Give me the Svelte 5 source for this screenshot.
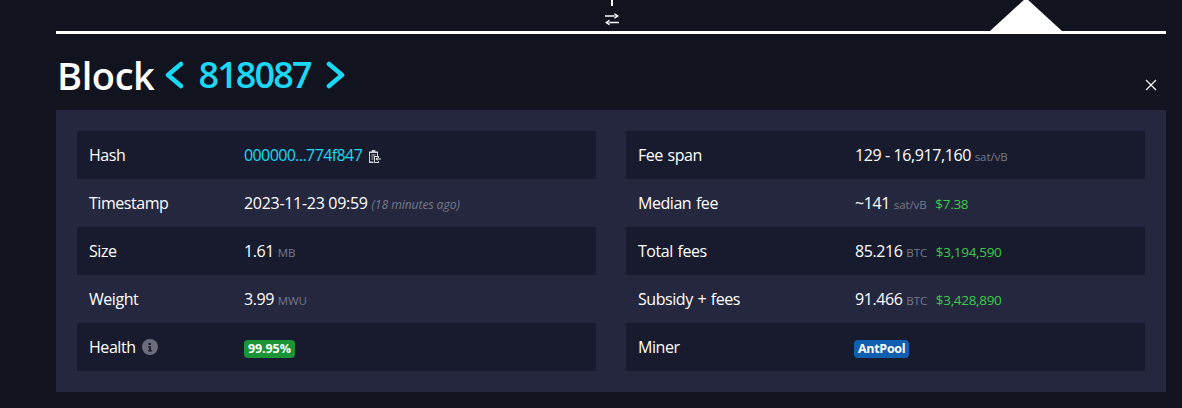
<script>
const left = [
	{ label: 'Hash' },
	{ label: 'Timestamp' },
	{ label: 'Size' },
	{ label: 'Weight' },
	{ label: 'Health' }
];
const right = [
	{ label: 'Fee span', value: '129 - 16,917,160', unit: 'sat/vB' },
	{ label: 'Median fee', value: '~141', unit: 'sat/vB', fiat: '$7.38' },
	{ label: 'Total fees', value: '85.216', unit: 'BTC', fiat: '$3,194,590' },
	{ label: 'Subsidy + fees', value: '91.466', unit: 'BTC', fiat: '$3,428,890' }
];
</script>

<div class="page">
	<div class="top">
		<span class="tick"></span>
		<svg class="swap" width="14" height="13" viewBox="0 0 14 13" aria-hidden="true">
			<path d="M0 2.300h10.500v1.500H0zM14 3l-4.500-3v6zM14 8.800H3.500v1.500H14zM0 9.500l4.500-3v6z" fill="#fff" />
		</svg>
		<span class="arrow"></span>
	</div>

	<div class="heading">
		<h1>Block</h1>
		<svg class="chev first" width="19" height="28" viewBox="0 0 19 28" aria-hidden="true">
			<path d="M17 3L4 14l13 11" fill="none" stroke="#1bd8f4" stroke-width="4.500" stroke-linecap="round" stroke-linejoin="round" />
		</svg>
		<span class="height">818087</span>
		<svg class="chev" width="19" height="28" viewBox="0 0 19 28" aria-hidden="true">
			<path d="M3 3l13 11L3 25" fill="none" stroke="#1bd8f4" stroke-width="4.500" stroke-linecap="round" stroke-linejoin="round" />
		</svg>
		<svg class="close" width="12" height="12" viewBox="0 0 12 12" aria-hidden="true">
			<path d="M1 1l10 10M11 1L1 11" stroke="#fff" stroke-width="1.200" />
		</svg>
	</div>

	<div class="box">
		<div class="col">
			<div class="row">
				<span class="label">{left[0].label}</span>
				<span class="val">
					<span class="link">000000...774f847</span>
					<svg class="clip" width="12" height="13" viewBox="0 0 12 13" aria-hidden="true">
						<path d="M0 1.500h2.700V0h3.600v1.500H9V6H8V3H1v8.500h3.500V13H0z" fill="#d3d4da" />
						<path d="M2.500 4.500h4v1h-4zM2.500 6.500h2v1h-2zM2.500 8.500h2v1h-2z" fill="#d3d4da" />
						<path d="M5 6h5v2H9V7H6v5h3v-1h1v2H5z" fill="#d3d4da" />
						<path d="M12 8.500H8.500V7L6.500 9l2 2V9.500H12z" fill="#e6e7ec" />
					</svg>
				</span>
			</div>
			<div class="row">
				<span class="label">{left[1].label}</span>
				<span class="val wider">2023-11-23 09:59 <i class="ago">(18 minutes ago)</i></span>
			</div>
			<div class="row">
				<span class="label">{left[2].label}</span>
				<span class="val">1.61 <span class="unit">MB</span></span>
			</div>
			<div class="row">
				<span class="label">{left[3].label}</span>
				<span class="val">3.99 <span class="unit">MWU</span></span>
			</div>
			<div class="row">
				<span class="label">{left[4].label}
					<svg class="info" width="16" height="16" viewBox="0 0 16 16" aria-hidden="true">
						<circle cx="8" cy="8" r="8" fill="#6b6d7d" />
						<path d="M6.500 4h2.500v2H6.500zM6 7.200h3v4h1.200v1.300H6v-1.300h1.200V8.500H6z" fill="#181b2d" />
					</svg>
				</span>
				<span class="val"><span class="badge green">99.95%</span></span>
			</div>
		</div>

		<div class="col">
			{#each right as r}
				<div class="row wide">
					<span class="label">{r.label}</span>
					<span class="val">
						{r.value} <span class="unit">{r.unit}</span>
						{#if r.fiat}<span class="fiat">{r.fiat}</span>{/if}
					</span>
				</div>
			{/each}
			<div class="row wide">
				<span class="label">Miner</span>
				<span class="val"><span class="badge blue">AntPool</span></span>
			</div>
		</div>
	</div>
</div>

<style>
	:global(body) {
		margin: 0;
		background: #11131f;
	}

	.page {
		width: 1110px;
		height: 408px;
		margin-left: 56px;
		color: #fff;
		font-family: 'Open Sans', 'Noto Sans', sans-serif;
		overflow: hidden;
	}

	.top {
		position: relative;
		height: 31px;
		border-bottom: 3px solid #fff;
	}

	.tick {
		position: absolute;
		left: 555px;
		top: 0;
		width: 2px;
		height: 6px;
		background: #fff;
	}

	.swap {
		position: absolute;
		left: 549px;
		top: 13px;
	}

	.arrow {
		position: absolute;
		left: 934px;
		top: -2px;
		width: 72px;
		height: 33px;
		background: #fff;
		clip-path: polygon(50% 0, 100% 100%, 0 100%);
	}

	.heading {
		display: flex;
		align-items: center;
		height: 76px;
		padding-top: 6px;
		padding-left: 1px;
		box-sizing: border-box;
	}

	h1 {
		margin: 0;
		font-size: 38px;
		font-weight: 600;
		line-height: 1;
		letter-spacing: -0.4px;
	}

	.chev {
		margin-left: 15px;
	}

	.chev.first {
		margin-left: 10px;
	}

	.height {
		margin-left: 15px;
		font-size: 36px;
		font-weight: 600;
		line-height: 1;
		color: #1bd8f4;
		letter-spacing: -1.900px;
	}

	.close {
		margin-left: auto;
		margin-right: 9px;
		margin-top: 20px;
	}

	.box {
		display: grid;
		grid-template-columns: 519px 519px;
		gap: 30px;
		padding: 21px;
		background: #24273e;
		height: 240px;
	}

	.row {
		display: flex;
		align-items: center;
		height: 48px;
		padding-left: 12px;
		font-size: 16px;
	}

	.row:nth-child(odd) {
		background: #181b2d;
	}

	.label {
		display: flex;
		align-items: center;
		gap: 6px;
		width: 155px;
		letter-spacing: -0.45px;
		word-spacing: 1px;
	}

	.row.wide .label {
		width: 217px;
	}

	.val {
		letter-spacing: -0.4px;
		white-space: nowrap;
	}

	.val.wider {
		letter-spacing: -0.3px;
	}

	.link {
		color: #1bd8f4;
		letter-spacing: -0.6px;
	}

	.clip {
		margin-left: 3px;
		vertical-align: -2px;
	}

	.unit {
		font-size: 11.500px;
		color: #77798a;
		letter-spacing: -0.1px;
	}

	.ago {
		font-size: 12.200px;
		color: #77798a;
		letter-spacing: -0.1px;
	}

	.fiat {
		margin-left: 5px;
		font-size: 13.500px;
		color: #3bcc49;
		letter-spacing: -0.3px;
	}

	.badge {
		display: inline-block;
		padding: 0 4px;
		font-size: 12.500px;
		font-weight: 700;
		line-height: 18px;
		border-radius: 4px;
		letter-spacing: -0.1px;
		vertical-align: middle;
	}

	.green {
		background: #1a9436;
	}

	.blue {
		background: #105fb0;
		margin-left: -1px;
		letter-spacing: -0.3px;
	}
</style>
